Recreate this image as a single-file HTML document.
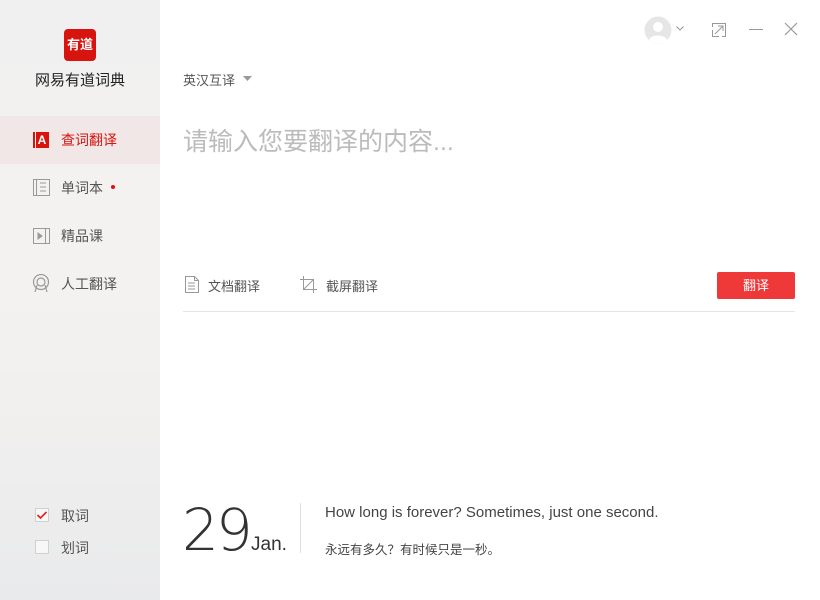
<!DOCTYPE html>
<html><head><meta charset="utf-8"><style>
*{margin:0;padding:0;box-sizing:border-box}
body{width:820px;height:600px;overflow:hidden;background:#fff;font-family:"Liberation Sans","Noto Sans CJK SC",sans-serif;position:relative}
.side{position:absolute;left:0;top:0;width:160px;height:600px;background:linear-gradient(#f0f0f0 0%,#f4f2f0 40%,#f3f1ef 60%,#e9eaec 100%)}
.abs{position:absolute}
.nav{position:absolute;left:0;width:160px;height:48px;font-size:14px;color:#555;line-height:48px;padding-left:61px}
</style></head><body>
<div class="side">
 <div class="abs" style="left:64px;top:29px;width:32px;height:32px;background:#d8140f;border-radius:4px;color:#fff;font-size:13px;line-height:32px;text-align:center;font-weight:bold">有道</div>
 <div class="abs" style="left:0;width:160px;top:69px;text-align:center;font-size:15px;color:#222">网易有道词典</div>
 <div class="nav" style="top:116px;background:#f1e7e7;color:#d8140f">查词翻译</div>
 <div class="abs" style="left:33px;top:132px;width:16px;height:16px;background:#d8140f;border-left:2px solid #d8140f;box-shadow:inset 1px 0 0 #fff;color:#fff;font-size:12px;font-weight:bold;text-align:center;line-height:16px">A</div>
 <div class="nav" style="top:164px">单词本</div>
 <div class="abs" style="left:111px;top:185px;width:4px;height:4px;border-radius:50%;background:#d8140f"></div>
 <svg class="abs" style="left:33px;top:179px" width="17" height="17" fill="none" stroke="#999" stroke-width="1"><rect x="0.5" y="0.5" width="16" height="16"/><line x1="3.5" y1="0.5" x2="3.5" y2="16.5"/><path d="M7 4h6M7 8h6M7 12h6"/></svg>
 <div class="nav" style="top:212px">精品课</div>
 <svg class="abs" style="left:33px;top:228px" width="17" height="16" fill="none" stroke="#999"><rect x="0.5" y="0.5" width="16" height="15"/><line x1="12.5" y1="0.5" x2="12.5" y2="15.5"/><path d="M5 5v6l4-3z" fill="#999"/></svg>
 <div class="nav" style="top:260px">人工翻译</div>
 <svg class="abs" style="left:32px;top:274px" width="18" height="19" fill="none" stroke="#999" stroke-width="1.2"><circle cx="9" cy="8" r="7.5"/><circle cx="9" cy="8" r="4"/><path d="M5 11l-2 7M13 11l2 7"/></svg>
 <div class="abs" style="left:35px;top:508px;width:14px;height:14px;border:1px solid #d0d0d0;background:#f7f7f7"></div>
 <svg class="abs" style="left:36px;top:510px" width="12" height="10"><path d="M1.5 5l3 3 6-6" stroke="#e02020" stroke-width="1.6" fill="none"/></svg>
 <div class="abs" style="left:61px;top:506px;font-size:14px;color:#555">取词</div>
 <div class="abs" style="left:35px;top:540px;width:14px;height:14px;border:1px solid #d0d0d0;background:#f7f7f7"></div>
 <div class="abs" style="left:61px;top:538px;font-size:14px;color:#555">划词</div>
</div>
<svg class="abs" style="left:644px;top:16px" width="28" height="28"><circle cx="14" cy="14" r="13.5" fill="#e6e6e6"/><circle cx="14" cy="11" r="5" fill="#fff"/><path d="M5 24c2-6 16-6 18 0a13.5 13.5 0 0 1-18 0z" fill="#fff"/></svg>
<svg class="abs" style="left:676px;top:26px" width="8" height="5"><path d="M0.5 0.5l3.5 3.5 3.5-3.5" stroke="#999" fill="none"/></svg>
<svg class="abs" style="left:712px;top:23px" width="14" height="14" fill="none" stroke="#999"><path d="M0.5 4V0.5h13v13H10M0.5 7v6.5h6.5M3 11l8-8M6 3h5v5"/></svg>
<div class="abs" style="left:749px;top:29px;width:14px;height:1px;background:#999"></div>
<svg class="abs" style="left:784px;top:22px" width="14" height="14"><path d="M1 1l12 12M13 1L1 13" stroke="#999" stroke-width="1.2"/></svg>
<div class="abs" style="left:183px;top:70px;font-size:13px;color:#555">英汉互译</div>
<svg class="abs" style="left:243px;top:76px" width="9" height="5"><path d="M0 0h9L4.5 5z" fill="#999"/></svg>
<div class="abs" style="left:183px;top:122px;font-size:25px;color:#bbb">请输入您要翻译的内容...</div>
<svg class="abs" style="left:185px;top:276px" width="14" height="17" fill="none" stroke="#999"><path d="M0.5 0.5h9l4 4v12H0.5z M9.5 0.5v4h4 M3 7h7M3 10h7M3 13h7"/></svg>
<div class="abs" style="left:208px;top:276px;font-size:13px;color:#555">文档翻译</div>
<svg class="abs" style="left:300px;top:276px" width="17" height="17" fill="none" stroke="#999"><path d="M3.5 0v13.5H17 M0 3.5h13.5V17 M3.5 13.5L13.5 3.5"/></svg>
<div class="abs" style="left:326px;top:276px;font-size:13px;color:#555">截屏翻译</div>
<div class="abs" style="left:717px;top:272px;width:78px;height:27px;background:#ef3838;border-radius:2px;color:#fff;font-size:13px;text-align:center;line-height:27px">翻译</div>
<div class="abs" style="left:183px;top:311px;width:612px;height:1px;background:#e6e6e6"></div>
<div class="abs" style="left:182px;top:496px;font-size:58px;color:#333;letter-spacing:-3px;font-family:'DejaVu Sans ExtraLight','DejaVu Sans Light','Liberation Sans',sans-serif;font-weight:200">29</div>
<div class="abs" style="left:251px;top:534px;font-size:19px;color:#333">Jan.</div>
<div class="abs" style="left:300px;top:503px;width:1px;height:50px;background:#ddd"></div>
<div class="abs" style="left:325px;top:504px;font-size:15px;color:#444">How long is forever? Sometimes, just one second.</div>
<div class="abs" style="left:325px;top:539px;font-size:12.5px;color:#444">永远有多久？有时候只是一秒。</div>
</body></html>
